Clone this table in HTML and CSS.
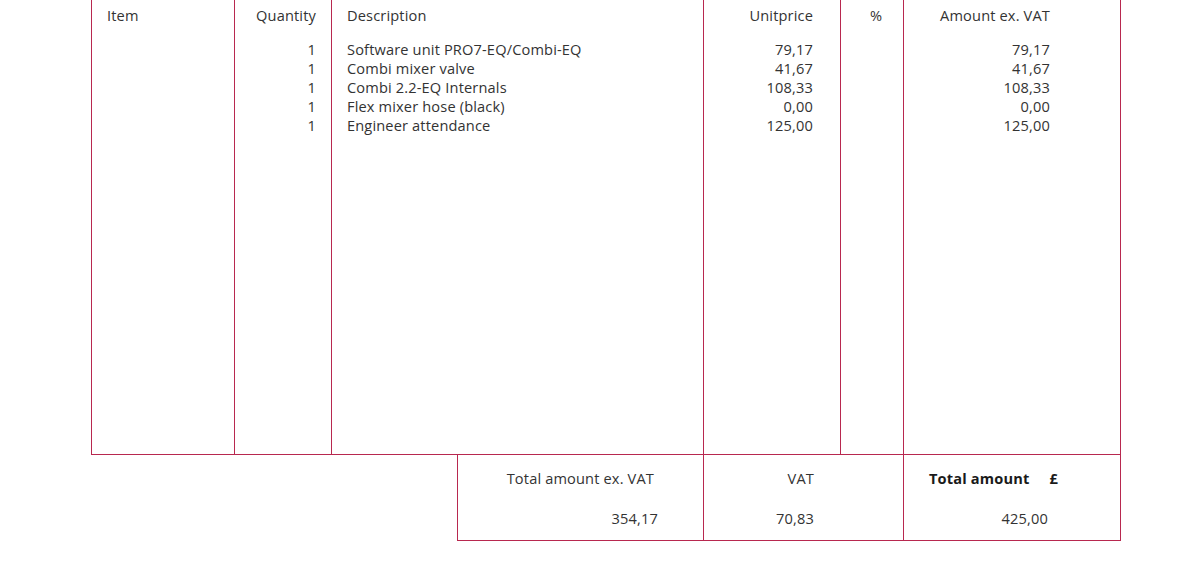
FILE: index.html
```html
<!DOCTYPE html>
<html>
<head>
<meta charset="utf-8">
<link rel="stylesheet" href="styles.css">
</head>
<body>
<div class="sheet">
  <div class="lines">
    <div class="col c-item">
      <div class="head">Item</div>
    </div>
    <div class="col c-qty">
      <div class="head">Quantity</div>
      <div class="rows">
        <div>1</div><div>1</div><div>1</div><div>1</div><div>1</div>
      </div>
    </div>
    <div class="col c-desc">
      <div class="head">Description</div>
      <div class="rows">
        <div>Software unit PRO7-EQ/Combi-EQ</div>
        <div>Combi mixer valve</div>
        <div>Combi 2.2-EQ Internals</div>
        <div>Flex mixer hose (black)</div>
        <div>Engineer attendance</div>
      </div>
    </div>
    <div class="col c-unit">
      <div class="head">Unitprice</div>
      <div class="rows">
        <div>79,17</div><div>41,67</div><div>108,33</div><div>0,00</div><div>125,00</div>
      </div>
    </div>
    <div class="col c-pct">
      <div class="head">%</div>
    </div>
    <div class="col c-amt">
      <div class="head">Amount ex. VAT</div>
      <div class="rows">
        <div>79,17</div><div>41,67</div><div>108,33</div><div>0,00</div><div>125,00</div>
      </div>
    </div>
  </div>
  <div class="totals">
    <div class="tcell t-net">
      <div class="tlabel">Total amount ex. VAT</div>
      <div class="tvalue">354,17</div>
    </div>
    <div class="tcell t-vat">
      <div class="tlabel">VAT</div>
      <div class="tvalue">70,83</div>
    </div>
    <div class="tcell t-sum">
      <div class="tlabel strong"><span>Total amount</span><span>£</span></div>
      <div class="tvalue">425,00</div>
    </div>
  </div>
</div>
</body>
</html>
```
FILE: styles.css
```css
html, body {
  margin: 0;
  padding: 0;
  background: #ffffff;
}
body {
  font-family: "Open Sans", "Noto Sans", sans-serif;
  font-size: 14.6px;
  letter-spacing: 0.15px;
  color: #333333;
}
.sheet {
  margin-left: 91px;
  width: 1030px;
}
.lines {
  display: grid;
  grid-template-columns: 143px 97px 372px 137px 63px 218px;
  height: 455px;
  box-sizing: border-box;
  border-bottom: 1px solid #b8284f;
}
.col {
  border-left: 1px solid #b8284f;
  box-sizing: border-box;
}
.c-amt {
  border-right: 1px solid #b8284f;
}
.head {
  height: 19px;
  line-height: 19px;
  margin-top: 6px;
  margin-bottom: 15px;
}
.rows div {
  height: 19px;
  line-height: 19px;
}
.c-item { padding-left: 15px; }
.c-qty { text-align: right; padding-right: 15px; }
.c-desc { padding-left: 15px; }
.c-unit { text-align: right; padding-right: 27px; }
.c-pct { text-align: center; padding-left: 8px; }
.c-amt { text-align: right; padding-right: 70px; }

.totals {
  margin-left: 366px;
  display: grid;
  grid-template-columns: 246px 200px 218px;
  height: 86px;
  box-sizing: border-box;
  border-bottom: 1px solid #b8284f;
}
.tcell {
  border-left: 1px solid #b8284f;
  box-sizing: border-box;
  text-align: right;
}
.t-sum { border-right: 1px solid #b8284f; }
.tlabel {
  height: 19px;
  line-height: 19px;
  margin-top: 14px;
}
.tvalue {
  height: 19px;
  line-height: 19px;
  margin-top: 21px;
}
.t-net { padding-right: 49px; }
.t-net .tvalue { margin-right: -4px; }
.t-vat { padding-right: 89px; }
.t-sum { padding-right: 72px; }
.tlabel.strong {
  font-weight: 700;
  color: #1a1a1a;
  display: flex;
  justify-content: space-between;
  padding-left: 25px;
  margin-right: -10px;
}
```
